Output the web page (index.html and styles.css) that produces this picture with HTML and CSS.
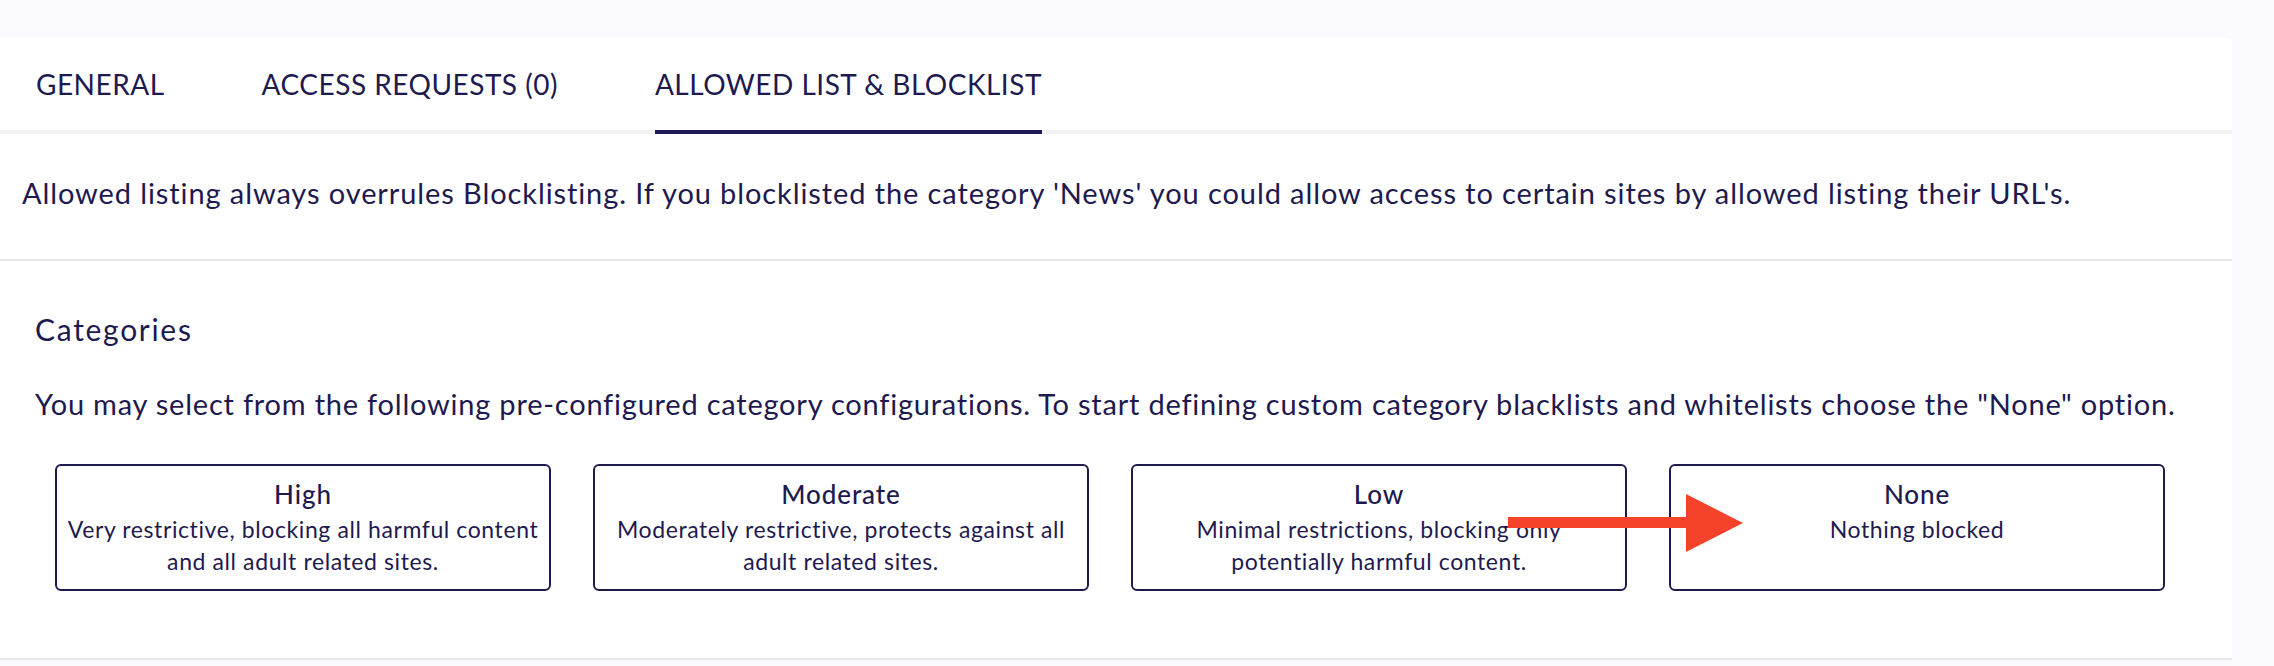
FILE: index.html
```html
<!DOCTYPE html>
<html lang="en">
<head>
    <meta charset="UTF-8">
    <meta name="viewport" content="width=device-width, initial-scale=1.0">
    <title>Filtering Settings</title>
    <link rel="stylesheet" href="styles.css">
</head>
<body>
    <div class="panel">
        <!-- Tabs -->
        <div class="tabs">
            <div class="tab">GENERAL</div>
            <div class="tab">ACCESS REQUESTS (0)</div>
            <div class="tab active">ALLOWED LIST &amp; BLOCKLIST</div>
        </div>

        <div class="intro">
            Allowed listing always overrules Blocklisting. If you blocklisted the category 'News' you could allow access to certain sites by allowed listing their URL's.
        </div>

        <!-- Categories -->
        <div class="categories">
            <h3 class="section-title">Categories</h3>
            <p class="section-text">You may select from the following pre-configured category configurations. To start defining custom category blacklists and whitelists choose the "None" option.</p>

            <div class="cards">
                <div class="card">
                    <div class="card-title">High</div>
                    <div class="card-text">Very restrictive, blocking all harmful content and all adult related sites.</div>
                </div>
                <div class="card">
                    <div class="card-title">Moderate</div>
                    <div class="card-text">Moderately restrictive, protects against all adult related sites.</div>
                </div>
                <div class="card">
                    <div class="card-title">Low</div>
                    <div class="card-text">Minimal restrictions, blocking only potentially harmful content.</div>
                </div>
                <div class="card">
                    <div class="card-title">None</div>
                    <div class="card-text">Nothing blocked</div>
                </div>
            </div>
        </div>
    </div>

    <!-- Annotation arrow -->
    <svg class="arrow" width="236" height="60" viewBox="0 0 236 60">
        <rect x="0" y="23" width="182" height="11" fill="#f4432a"/>
        <polygon points="178,0 235,29 178,58" fill="#f4432a"/>
    </svg>
</body>
</html>
```

FILE: styles.css
```css
* {
    margin: 0;
    padding: 0;
    box-sizing: border-box;
    font-family: Lato, "Noto Sans", sans-serif;
}

body {
    background: #f9f9fe;
    color: #1e1a4f;
    position: relative;
}

.panel {
    margin-top: 38px;
    width: 2232px;
    background: white;
    border-top-right-radius: 4px;
}

.tabs {
    display: flex;
    gap: 97px;
    padding-left: 36px;
    height: 96px;
    border-bottom: 4px solid #f3f3f3;
}

.tab {
    font-size: 28px;
    letter-spacing: 0.5px;
    display: flex;
    align-items: center;
    margin-bottom: -4px;
    border-bottom: 4px solid transparent;
}

.tab.active {
    border-bottom-color: #1e1a56;
}

.intro {
    font-size: 29px;
    letter-spacing: 0.9px;
    height: 127px;
    padding: 0 0 8px 22px;
    display: flex;
    align-items: center;
    border-bottom: 2px solid #e6e6e6;
}

.categories {
    padding: 0 35px;
    height: 399px;
    border-bottom: 2px solid #e6e6e6;
}

.section-title {
    font-size: 30px;
    font-weight: normal;
    letter-spacing: 1.7px;
    padding-top: 50px;
    line-height: 36px;
}

.section-text {
    font-size: 29px;
    letter-spacing: 0.78px;
    margin-top: 39px;
    line-height: 36px;
}

.cards {
    display: grid;
    grid-template-columns: repeat(4, 496px);
    gap: 42px;
    margin: 42px 0 0 20px;
}

.card {
    border: 2px solid #1e1a4f;
    border-radius: 6px;
    text-align: center;
    padding: 12px 6px 14px;
    height: 127px;
}

.card-title {
    font-size: 26px;
    font-weight: 500;
    letter-spacing: 0.9px;
    line-height: 32px;
}

.card-text {
    font-size: 23px;
    letter-spacing: 0.6px;
    line-height: 32px;
    margin-top: 3px;
}

.arrow {
    position: absolute;
    left: 1508px;
    top: 494px;
}
```
